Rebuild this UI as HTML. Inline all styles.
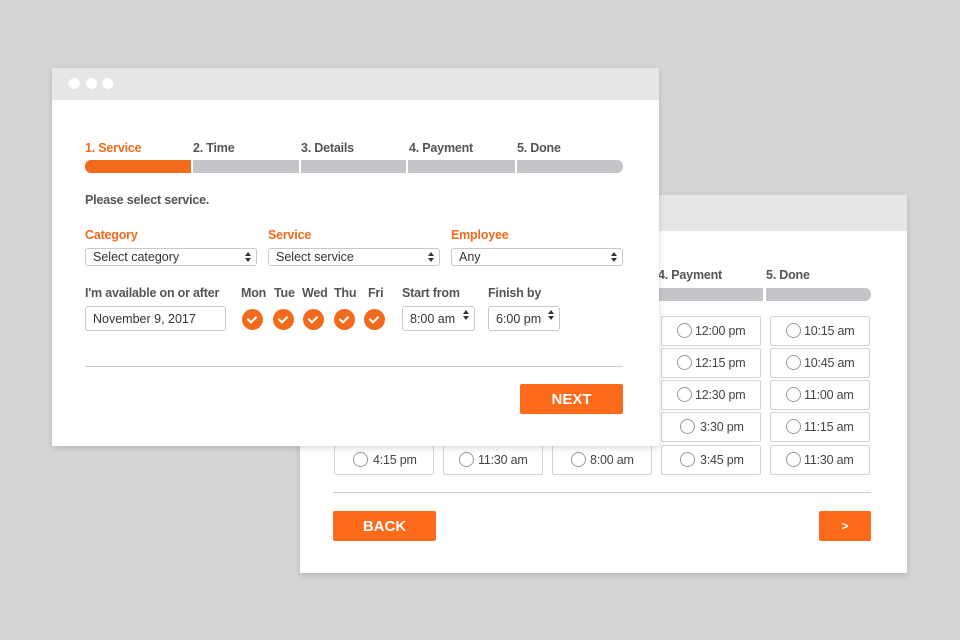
<!DOCTYPE html><html><head><style>
*{box-sizing:border-box;margin:0;padding:0}
body{width:960px;height:640px;background:#d5d5d5;font-family:"Liberation Sans",sans-serif;position:relative;overflow:hidden;color:#555}
.a{position:absolute}
.win{position:absolute;background:#fff;box-shadow:0 2px 6px rgba(0,0,0,.15)}
.hd{position:absolute;left:0;top:0;right:0;background:#e6e6e6}
.t{position:absolute;font-size:12.5px;font-weight:bold;color:#555;white-space:nowrap;letter-spacing:-.2px}
.o{color:#f26a1b}
.bar{position:absolute;height:13px;background:#c3c5c8}
.sel{position:absolute;border:1px solid #c8c8c8;border-radius:3px;height:18px;font-size:12.5px;color:#333;padding:1px 7px;line-height:15px;background:#fff}
.sel:after{content:"";position:absolute;right:5px;top:3px;width:0;height:0;border-left:3px solid transparent;border-right:3px solid transparent;border-bottom:4px solid #333}
.sel:before{content:"";position:absolute;right:5px;top:9px;width:0;height:0;border-left:3px solid transparent;border-right:3px solid transparent;border-top:4px solid #333}
.cell{position:absolute;width:100px;height:30px;border:1px solid #d4d4d4;border-radius:2px;font-size:12.5px;color:#444;line-height:29px;padding-left:33px;letter-spacing:-.2px}
.cell i{position:absolute;left:15px;top:6px;width:15px;height:15px;border:1px solid #999;border-radius:50%}
.btn{position:absolute;background:#fd6a1a;color:#fff;font-weight:bold;font-size:15px;text-align:center;border-radius:2px}
.ck{position:absolute;width:21px;height:21px;border-radius:50%;background:#f26a1b}
.ck:after{content:"";position:absolute;left:7px;top:5px;width:4px;height:7px;border:solid #fff;border-width:0 2px 2px 0;transform:rotate(45deg)}
</style></head><body>
<div class="win" style="left:300px;top:195px;width:607px;height:378px">
<div class="hd" style="height:36px"></div>
</div>
<div class="t" style="left:658px;top:268px">4. Payment</div>
<div class="t" style="left:766px;top:268px">5. Done</div>
<div class="bar" style="left:659px;top:288px;width:104px"></div>
<div class="bar" style="left:766px;top:288px;width:105px;border-radius:0 6px 6px 0"></div>
<div class="cell" style="left:661px;top:316px"><i></i>12:00 pm</div>
<div class="cell" style="left:770px;top:316px"><i></i>10:15 am</div>
<div class="cell" style="left:661px;top:348px"><i></i>12:15 pm</div>
<div class="cell" style="left:770px;top:348px"><i></i>10:45 am</div>
<div class="cell" style="left:661px;top:380px"><i></i>12:30 pm</div>
<div class="cell" style="left:770px;top:380px"><i></i>11:00 am</div>
<div class="cell" style="left:661px;top:412px;padding-left:38px"><i style="left:18px"></i>3:30 pm</div>
<div class="cell" style="left:770px;top:412px"><i></i>11:15 am</div>
<div class="cell" style="left:334px;top:445px;padding-left:38px"><i style="left:18px"></i>4:15 pm</div>
<div class="cell" style="left:443px;top:445px;padding-left:34px"><i style="left:15px"></i>11:30 am</div>
<div class="cell" style="left:552px;top:445px;padding-left:37px"><i style="left:18px"></i>8:00 am</div>
<div class="cell" style="left:661px;top:445px;padding-left:38px"><i style="left:18px"></i>3:45 pm</div>
<div class="cell" style="left:770px;top:445px"><i></i>11:30 am</div>
<div class="a" style="left:333px;top:492px;width:538px;height:1px;background:#ccc"></div>
<div class="btn" style="left:333px;top:511px;width:103px;height:30px;line-height:32px">BACK</div>
<div class="btn" style="left:819px;top:511px;width:52px;height:30px;line-height:31px;font-size:12px">&gt;</div>

<div class="win" style="left:52px;top:68px;width:607px;height:378px">
<div class="hd" style="height:32px"></div>
<div class="a" style="left:17px;top:10px;width:11px;height:11px;border-radius:50%;background:#fff"></div>
<div class="a" style="left:34px;top:10px;width:11px;height:11px;border-radius:50%;background:#fff"></div>
<div class="a" style="left:50px;top:10px;width:11px;height:11px;border-radius:50%;background:#fff"></div>
</div>
<div class="t o" style="left:85px;top:141px">1. Service</div>
<div class="t" style="left:193px;top:141px">2. Time</div>
<div class="t" style="left:301px;top:141px">3. Details</div>
<div class="t" style="left:409px;top:141px">4. Payment</div>
<div class="t" style="left:517px;top:141px">5. Done</div>
<div class="bar" style="left:85px;top:160px;width:106px;background:#f26a1b;border-radius:6px 0 0 6px"></div>
<div class="bar" style="left:193px;top:160px;width:106px"></div>
<div class="bar" style="left:301px;top:160px;width:105px"></div>
<div class="bar" style="left:408px;top:160px;width:107px"></div>
<div class="bar" style="left:517px;top:160px;width:106px;border-radius:0 6px 6px 0"></div>
<div class="t" style="left:85px;top:193px">Please select service.</div>
<div class="t o" style="left:85px;top:228px">Category</div>
<div class="t o" style="left:268px;top:228px">Service</div>
<div class="t o" style="left:451px;top:228px">Employee</div>
<div class="sel" style="left:85px;top:248px;width:172px">Select category</div>
<div class="sel" style="left:268px;top:248px;width:172px">Select service</div>
<div class="sel" style="left:451px;top:248px;width:172px">Any</div>
<div class="t" style="left:85px;top:286px">I'm available on or after</div>
<div class="t" style="left:241px;top:286px">Mon</div>
<div class="t" style="left:274px;top:286px">Tue</div>
<div class="t" style="left:302px;top:286px">Wed</div>
<div class="t" style="left:334px;top:286px">Thu</div>
<div class="t" style="left:368px;top:286px">Fri</div>
<div class="t" style="left:402px;top:286px">Start from</div>
<div class="t" style="left:488px;top:286px">Finish by</div>
<div class="a" style="left:85px;top:306px;width:141px;height:25px;border:1px solid #c8c8c8;border-radius:3px;font-size:12.5px;color:#333;padding:5px 7px">November 9, 2017</div>
<div class="ck" style="left:242px;top:309px"></div>
<div class="ck" style="left:273px;top:309px"></div>
<div class="ck" style="left:303px;top:309px"></div>
<div class="ck" style="left:334px;top:309px"></div>
<div class="ck" style="left:364px;top:309px"></div>
<div class="sel" style="left:402px;top:306px;width:73px;height:25px;line-height:22px">8:00 am</div>
<div class="sel" style="left:488px;top:306px;width:72px;height:25px;line-height:22px">6:00 pm</div>
<div class="a" style="left:85px;top:366px;width:538px;height:1px;background:#ccc"></div>
<div class="btn" style="left:520px;top:384px;width:103px;height:30px;line-height:32px">NEXT</div>
</body></html>
